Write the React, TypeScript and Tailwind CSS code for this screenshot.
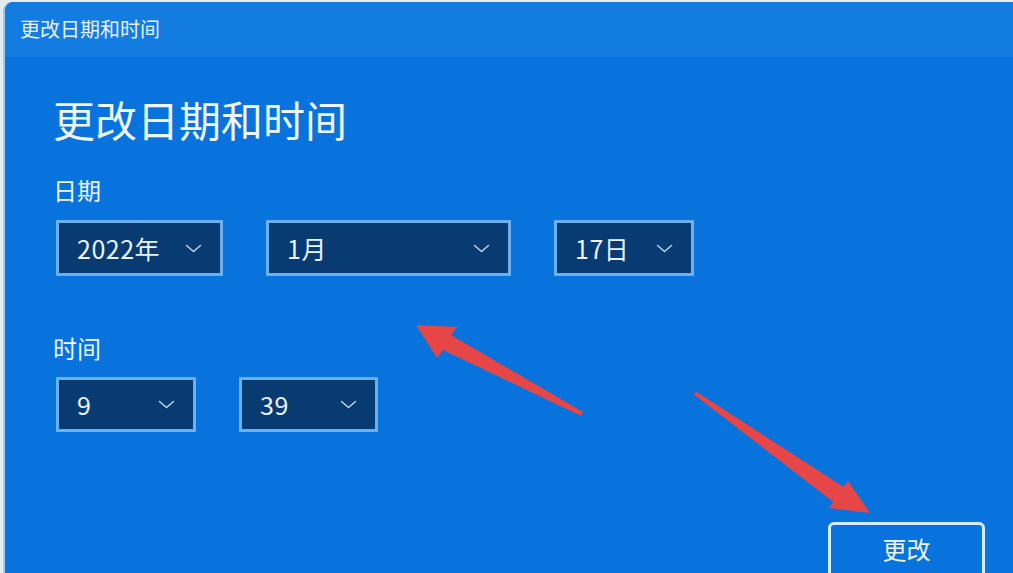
import React from 'react';

const font = { fontFamily: '"Noto Sans CJK SC", "Noto Sans", sans-serif' };

const Chevron: React.FC = () => (
  <svg width="17" height="9" viewBox="0 0 17 9" fill="none">
    <polyline points="1.5,1.5 8.5,7.5 15.5,1.5" stroke="#c6ddf5" strokeWidth="1.4" strokeLinecap="round" strokeLinejoin="round" />
  </svg>
);

type SelectProps = { value: string; width: string };

const Select: React.FC<SelectProps> = ({ value, width }) => (
  <div className={`${width} flex items-center justify-between border-[3px] border-[#6cb0ef] bg-[#083b72] pl-[18px] pr-[18px] text-[25px] tracking-[0.5px] text-[#eaf4fd]`}>
    <span className="leading-none">{value}</span>
    <Chevron />
  </div>
);

const Arrows: React.FC = () => (
  <svg className="pointer-events-none absolute inset-0" width="1013" height="573" viewBox="0 0 1013 573">
    <polygon
      points="416,325 457,327 451,335 583,412 581,416 443,350 437,358"
      fill="#f3433d"
      opacity="0.95"
    />
    <polygon
      points="870,513 848,481 843.6,487.1 696,391.4 694,394.6 833.4,501.9 829,508"
      fill="#f3433d"
      opacity="0.95"
    />
  </svg>
);

const App: React.FC = () => {
  return (
    <div className="relative h-[573px] w-[1013px] overflow-hidden bg-[#e6ebf0] pl-[3px] pt-[2px]" style={font}>
      <div className="flex h-full flex-col rounded-tl-[9px] border-l-2 border-[#9ccbf0] bg-[#0873dc]">
        {/* Title bar */}
        <div className="flex h-[55px] shrink-0 items-center rounded-tl-[9px] bg-[#137ce0] pb-[2px] pl-[15px] text-[20px] text-[#e6f1fb]">
          更改日期和时间
        </div>

        {/* Content */}
        <div className="flex flex-1 flex-col pl-[48px] text-[#eef6fd]">
          <h1 className="mt-[41px] shrink-0 text-[42px] leading-none">更改日期和时间</h1>

          <div className="mt-[38px] shrink-0 text-[24px] leading-none">日期</div>
          <div className="ml-[3px] mt-[18px] flex h-[56px] shrink-0 gap-[43px]">
            <Select value="2022年" width="w-[167px]" />
            <Select value="1月" width="w-[245px]" />
            <Select value="17日" width="w-[140px]" />
          </div>

          <div className="mt-[60px] shrink-0 text-[24px] leading-none">时间</div>
          <div className="ml-[3px] mt-[17px] flex h-[55px] shrink-0 gap-[43px]">
            <Select value="9" width="w-[140px]" />
            <Select value="39" width="w-[139px]" />
          </div>

          <div className="mr-[28px] mt-[90px] flex shrink-0 justify-end">
            <button className="flex h-[58px] w-[157px] items-start justify-center rounded-[6px] border-[3px] border-[#d6ebfb] bg-[#0873dc] pt-[12px] text-[24px] leading-none text-[#eef6fd]">
              更改
            </button>
          </div>
        </div>
      </div>
      <Arrows />
    </div>
  );
};

export default App;
